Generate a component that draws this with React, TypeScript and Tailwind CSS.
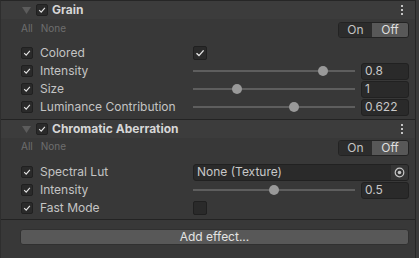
import React from "react";

const Check = ({ on = true, size = 12 }: { on?: boolean; size?: number }) => (
  <div
    className="flex items-center justify-center rounded-[2px] border border-[#202020] bg-[#2a2a2a]"
    style={{ width: size, height: size }}
  >
    {on && (
      <svg width={size - 4} height={size - 4} viewBox="0 0 10 10">
        <path d="M1.5 5.2 L4 7.6 L8.6 2.4" fill="none" stroke="#e6e6e6" strokeWidth="1.4" />
      </svg>
    )}
  </div>
);

const Kebab = () => (
  <div className="flex flex-col gap-[2px] pr-[2px]">
    <div className="h-[2px] w-[2px] bg-[#c4c4c4]" />
    <div className="h-[2px] w-[2px] bg-[#c4c4c4]" />
    <div className="h-[2px] w-[2px] bg-[#c4c4c4]" />
  </div>
);

function Header({ title }: { title: string }) {
  return (
    <div className="flex h-[18px] items-center bg-[#3c3c3c] pl-[21px] pr-[10px]">
      <svg width="9" height="7" viewBox="0 0 9 7" className="mr-[5px]">
        <path d="M0 0 H9 L4.5 7 Z" fill="#5c5c5c" />
      </svg>
      <Check />
      <span className="ml-[4px] text-[12px] font-bold text-[#d6d6d6]">{title}</span>
      <div className="ml-auto">
        <Kebab />
      </div>
    </div>
  );
}

function Toggle() {
  return (
    <div className="flex h-4 overflow-hidden rounded-[3px] border border-[#232323] text-[12px] leading-none">
      <div className="flex w-[33px] items-center justify-center bg-[#2c2c2c] text-[#c4c4c4]">On</div>
      <div className="flex w-[36px] items-center justify-center bg-[#585858] text-[#dedede]">Off</div>
    </div>
  );
}

function AllNone() {
  return (
    <div className="flex gap-[8px] pl-[20px] text-[10px] leading-[12px] text-[#6e6e6e]">
      <span>All</span>
      <span>None</span>
    </div>
  );
}

function Row({ label, children }: { label: string; children?: React.ReactNode }) {
  return (
    <div className="flex h-[18px] items-center pl-[20px] pr-[6px]">
      <Check />
      <span className="ml-[7px] w-[153px] text-[12px] text-[#c4c4c4]">{label}</span>
      <div className="flex flex-1 items-center">{children}</div>
    </div>
  );
}

function Slider({ value, frac }: { value: string; frac: number }) {
  return (
    <div className="flex w-full items-center">
      <div className="relative h-[2px] w-[162px] bg-[#5e5e5e]">
        <div
          className="absolute top-[-4px] h-[10px] w-[10px] rounded-full bg-[#999999]"
          style={{ left: frac * 162 - 5 }}
        />
      </div>
      <div className="ml-[6px] flex h-[17px] w-[48px] items-center rounded-[3px] border border-[#212121] bg-[#2a2a2a] pl-[3px] text-[12px] text-[#c8c8c8]">
        {value}
      </div>
    </div>
  );
}

export default function App() {
  return (
    <div className="flex h-[258px] w-[419px] font-['Inter',sans-serif] bg-[#383838]">
      <div className="flex w-[415px] flex-col border-l border-[#2e2e2e] border-t border-t-[#262626]">
        <Header title="Grain" />
        <div className="pt-[3px] pb-[3px]">
          <div className="flex items-start justify-between pr-[6px]">
            <AllNone />
            <Toggle />
          </div>
          <div className="mt-[6px]">
            <Row label="Colored">
              <Check size={14} />
            </Row>
            <Row label="Intensity">
              <Slider value="0.8" frac={0.8} />
            </Row>
            <Row label="Size">
              <Slider value="1" frac={0.27} />
            </Row>
            <Row label="Luminance Contribution">
              <Slider value="0.622" frac={0.622} />
            </Row>
          </div>
        </div>
        <div className="h-px bg-[#232323]" />
        <Header title="Chromatic Aberration" />
        <div className="pt-[2px] pb-[2px]">
          <div className="flex items-start justify-between pr-[6px]">
            <AllNone />
            <Toggle />
          </div>
          <div className="mt-[7px]">
            <Row label="Spectral Lut">
              <div className="flex h-[17px] w-full items-center overflow-hidden rounded-[3px] border border-[#212121] bg-[#2a2a2a] text-[12px] text-[#c8c8c8]">
                <span className="flex-1 pl-[3px]">None (Texture)</span>
                <div className="flex h-full w-[17px] items-center justify-center bg-[#353535]">
                  <svg width="11" height="11" viewBox="0 0 11 11">
                    <circle cx="5.5" cy="5.5" r="4.3" fill="none" stroke="#c4c4c4" strokeWidth="1.2" />
                    <circle cx="5.5" cy="5.5" r="1.8" fill="#c4c4c4" />
                  </svg>
                </div>
              </div>
            </Row>
            <Row label="Intensity">
              <Slider value="0.5" frac={0.5} />
            </Row>
            <Row label="Fast Mode">
              <Check size={14} on={false} />
            </Row>
          </div>
        </div>
        <div className="h-px bg-[#232323]" />
        <div className="pl-[19px] pr-[6px] pt-[9px]">
          <div className="flex h-4 items-center justify-center rounded-[3px] border border-[#303030] bg-[#585858] text-[12px] text-[#e4e4e4]">
            Add effect...
          </div>
        </div>
      </div>
      <div className="w-px bg-[#262626]" />
      <div className="flex-1 bg-[#3a3a3a]" />
    </div>
  );
}
